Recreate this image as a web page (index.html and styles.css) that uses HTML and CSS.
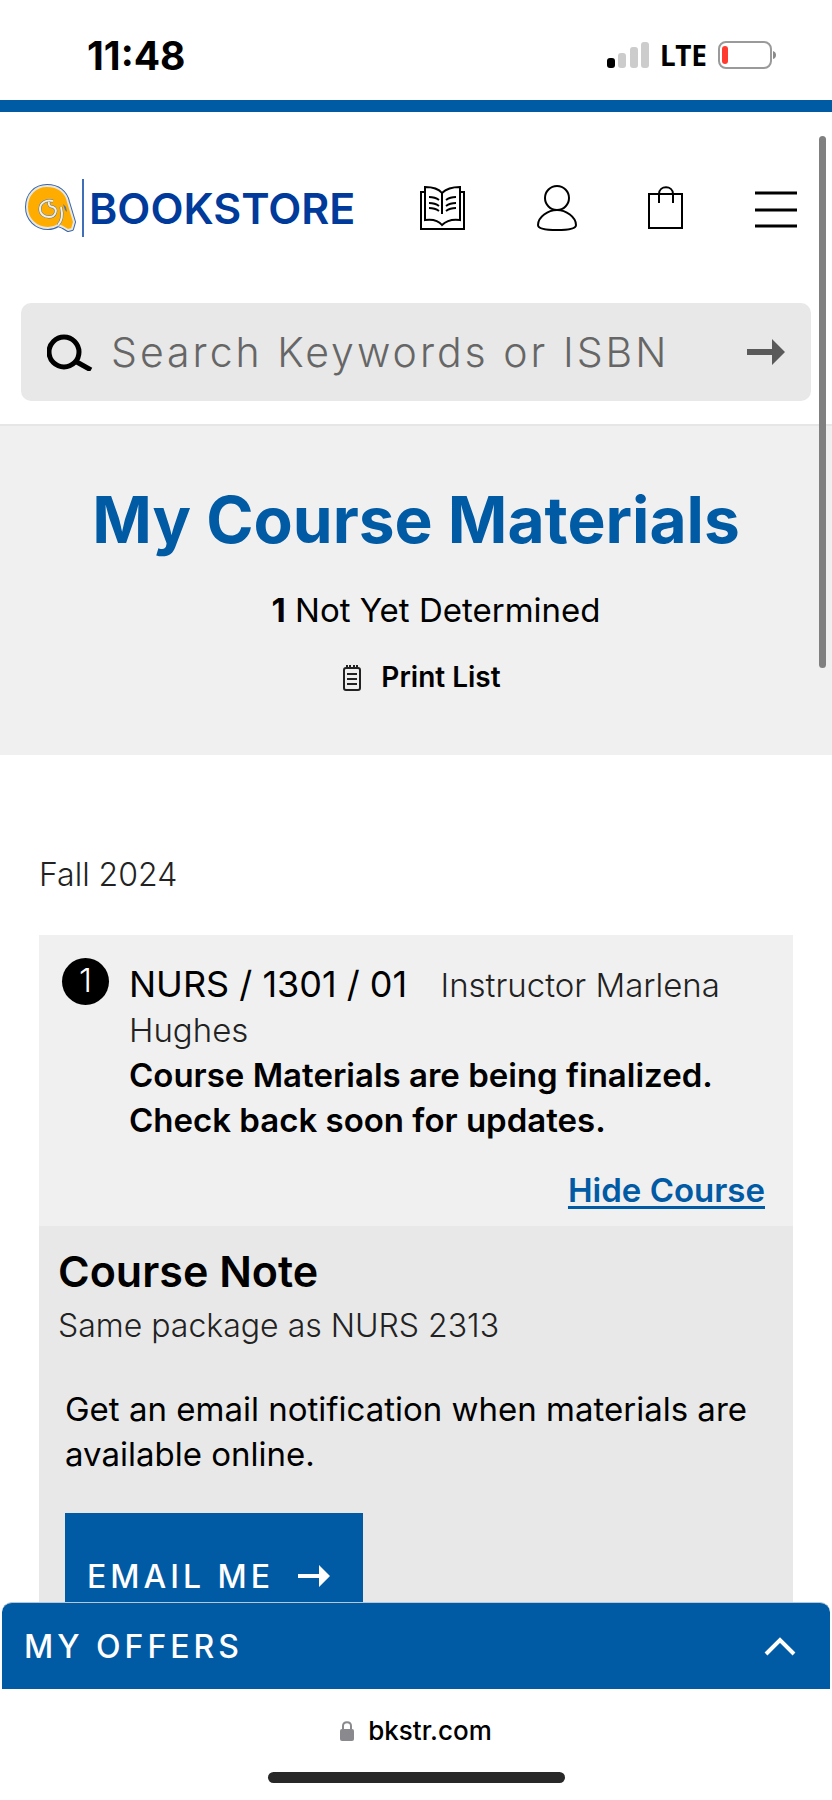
FILE: index.html
```
<!DOCTYPE html>
<html lang="en">

<head>
    <title>My Course Materials</title>
    <meta charset="utf-8">
    <meta name="viewport" content="width=device-width, initial-scale=1.0">
    <link rel="stylesheet" href="styles.css">
</head>

<body>

<div class="status">
    <span class="time">11:48</span>
    <div class="status-right">
        <svg width="42" height="28" viewBox="0 0 42 28" aria-hidden="true">
            <rect x="0" y="17" width="8" height="10" rx="3" fill="#000"/>
            <rect x="11" y="12" width="8" height="15" rx="3" fill="#ccc"/>
            <rect x="23" y="6" width="8" height="21" rx="3" fill="#ccc"/>
            <rect x="34" y="1" width="8" height="26" rx="3" fill="#ccc"/>
        </svg>
        <span class="network">LTE</span>
        <svg width="60" height="28" viewBox="0 0 60 28" aria-hidden="true">
            <rect x="1" y="1" width="52" height="26" rx="7" fill="none" stroke="#9a9a9a" stroke-width="2"/>
            <rect x="4" y="5" width="6" height="18" rx="3" fill="#ff3b30"/>
            <path d="M55 10q3 1 3 4t-3 4z" fill="#8a8a8a"/>
        </svg>
    </div>
</div>

<div class="page">
    <header class="header">
        <a class="logo" href="#">
            <svg width="52" height="48" viewBox="0 0 52 48" aria-hidden="true">
                <g stroke-linejoin="round">
                    <path d="M23 2C11 2 3 11 3 23s9 21 21 21c4 0 7-1 10-3l5 2 5 3 4-1 2-7-6-20C42 8 34 2 23 2z" fill="#ffac00" stroke="#3565b0" stroke-width="4"/>
                    <path d="M23 2C11 2 3 11 3 23s9 21 21 21c4 0 7-1 10-3l5 2 5 3 4-1 2-7-6-20C42 8 34 2 23 2z" fill="#ffac00" stroke="#e9e7dc" stroke-width="2"/>
                </g>
                <path d="M34 41c4-4 5-10 3-18M29 17c-7-2-13 2-13 8 0 5 4 8 9 8 7 0 9-8 4-10-3 0-5-2-4-5" fill="none" stroke="#56749c" stroke-width="3"/>
                <path d="M34 41c4-4 5-10 3-18M29 17c-7-2-13 2-13 8 0 5 4 8 9 8 7 0 9-8 4-10-3 0-5-2-4-5" fill="none" stroke="#f3efdf" stroke-width="2"/>
                <path d="M39 20l2 6 2 2-1-5z" fill="#56749c"/>
            </svg>
            <span class="logo-text">BOOKSTORE</span>
        </a>
        <nav class="nav">
            <button aria-label="Course materials">
                <svg width="46" height="46" viewBox="0 0 46 46">
                    <path d="M5 7H1v37h43V7h-4M5 2v33c7-1 13 0 17 5 5-5 11-6 18-5V2c-7 0-13 1-18 6C18 3 12 2 5 2zM22 8v21"/>
                    <path d="M9 12q6 0 10 3M9 18q6 0 10 3M9 23q6 0 10 3M36 12q-6 0-10 3M36 18q-6 0-10 3M36 23q-6 0-10 3"/>
                </svg>
            </button>
            <button aria-label="Account">
                <svg width="40" height="46" viewBox="0 0 40 46">
                    <circle cx="20" cy="13" r="12"/>
                    <path d="M20 25C11 25 1 32 1 40c0 3 5 5 19 5s19-2 19-5c0-8-10-15-19-15z"/>
                </svg>
            </button>
            <button aria-label="Shopping bag">
                <svg width="36" height="46" viewBox="0 0 36 46">
                    <path d="M1 9h33v34H1zM11 18V9c0-9 14-9 14 0v9"/>
                </svg>
            </button>
            <button aria-label="Menu">
                <svg width="42" height="46" viewBox="0 0 42 46">
                    <path d="M0 8h42M0 25h42M0 41h42" stroke-width="3"/>
                </svg>
            </button>
        </nav>
    </header>

    <form class="search" onsubmit="return false">
        <svg width="46" height="38" viewBox="0 0 46 38" aria-hidden="true">
            <circle cx="17" cy="19" r="15" fill="none" stroke="#000" stroke-width="5"/>
            <path d="M28 28l16 9" stroke="#000" stroke-width="5"/>
        </svg>
        <input type="text" aria-label="Search" placeholder="Search Keywords or ISBN">
        <button aria-label="Submit search">
            <svg width="38" height="26" viewBox="0 0 38 26">
                <path d="M0 10h25V0l13 13-13 13V16H0z" fill="#5a5a5a"/>
            </svg>
        </button>
    </form>

    <section class="hero">
        <h1>My Course Materials</h1>
        <p class="summary"><b>1</b> Not Yet Determined</p>
        <button class="print">
            <svg width="18" height="26" viewBox="0 0 18 26" aria-hidden="true">
                <rect x="1" y="3" width="16" height="22" rx="2"/>
                <path d="M4 0v4M7 0v4M11 0v4M14 0v4M4 9h10M4 14h10M4 19h10"/>
            </svg>
            Print List
        </button>
    </section>

    <main class="content">
        <p class="term">Fall 2024</p>
        <article class="course">
            <div class="course-top">
                <span class="number">1</span>
                <div class="course-info">
                    <p><span class="code">NURS / 1301 / 01</span> <span class="instructor">Instructor Marlena Hughes</span></p>
                    <p class="message">Course Materials are being finalized. Check back soon for updates.</p>
                </div>
            </div>
            <a class="hide" href="#">Hide Course</a>
            <div class="note">
                <h2>Course Note</h2>
                <p class="light">Same package as NURS 2313</p>
                <div class="notify">
                    <p>Get an email notification when materials are available online.</p>
                    <button class="email">
                        EMAIL ME
                        <svg width="32" height="22" viewBox="0 0 32 22" aria-hidden="true">
                            <path d="M0 9h21V0l11 11-11 11v-9H0z" fill="#fff"/>
                        </svg>
                    </button>
                </div>
            </div>
        </article>
    </main>
</div>

<div class="scrollbar"></div>

<button class="offers">
    MY OFFERS
    <svg width="32" height="20" viewBox="0 0 32 20" aria-hidden="true">
        <path d="M2 18L16 4l14 14" fill="none" stroke="#fff" stroke-width="4"/>
    </svg>
</button>

<footer class="browser">
    <div class="address">
        <svg width="14" height="20" viewBox="0 0 14 20" aria-hidden="true">
            <rect x="0" y="8" width="14" height="12" rx="2" fill="#8a8a8e"/>
            <path d="M3 9V5c0-5 8-5 8 0v4" fill="none" stroke="#8a8a8e" stroke-width="2"/>
        </svg>
        bkstr.com
    </div>
    <div class="home"></div>
</footer>

</body>

</html>
```

FILE: styles.css
```
* {
    box-sizing: border-box;
    margin: 0;
    padding: 0;
}

body {
    position: relative;
    display: flex;
    flex-direction: column;
    height: 100vh;
    overflow: hidden;
    background: #fff;
    color: #000;
    font-family: Inter, "Liberation Sans", sans-serif;
    font-size: 33px;
    line-height: 45px;
}

button {
    border: none;
    background: none;
    color: inherit;
    font: inherit;
    cursor: pointer;
}

svg {
    display: block;
    flex-shrink: 0;
}

/* phone status bar */
.status {
    display: flex;
    flex-shrink: 0;
    align-items: center;
    justify-content: space-between;
    height: 112px;
    padding: 10px 54px 0 87px;
    border-bottom: 12px solid #005aa4;
}

.time {
    font-size: 39px;
    font-weight: 700;
}

.status-right {
    display: flex;
    align-items: center;
    gap: 11px;
}

.network {
    font-family: "Noto Sans", sans-serif;
    font-size: 28px;
    font-weight: 700;
}

.page {
    flex: 1;
    min-height: 0;
    overflow: hidden;
}

.header {
    display: flex;
    align-items: center;
    justify-content: space-between;
    height: 191px;
    padding: 0 35px 0 24px;
}

.logo {
    display: flex;
    align-items: center;
    gap: 6px;
    color: #003a9b;
    text-decoration: none;
}

.logo-text {
    padding-left: 5px;
    border-left: 2px solid #3f6fb8;
    font-size: 43px;
    font-weight: 600;
    line-height: 58px;
}

.nav {
    display: flex;
    gap: 71px;
}

.nav svg {
    fill: none;
    stroke: #000;
    stroke-width: 2;
}

.search {
    display: flex;
    align-items: center;
    height: 98px;
    margin: 0 21px 23px;
    padding: 0 26px;
    border-radius: 10px;
    background: #e8e8e8;
}

.search input {
    flex: 1;
    min-width: 0;
    margin: 0 18px;
    border: none;
    outline: none;
    background: none;
    font-family: inherit;
    font-size: 41px;
    font-weight: 300;
    letter-spacing: 3px;
}

.search input::placeholder {
    color: #666;
    opacity: 1;
}

.hero {
    height: 331px;
    padding-top: 60px;
    border-top: 2px solid #e6e6e6;
    background: #f0f0f0;
    text-align: center;
}

.hero h1 {
    color: #005aa4;
    font-size: 64px;
    font-weight: 700;
    line-height: 68px;
}

.summary {
    margin-top: 34px;
    padding-left: 40px;
}

.print {
    display: flex;
    align-items: center;
    gap: 20px;
    margin: 22px auto 0;
    padding-left: 12px;
    font-size: 28px;
    font-weight: 600;
}

.print svg {
    fill: none;
    stroke: #222;
    stroke-width: 2;
}

.content {
    padding: 97px 39px 0;
}

.term,
.instructor,
.light {
    color: #222;
    font-weight: 300;
}

.term,
.light {
    font-size: 32px;
}

.course {
    margin-top: 38px;
    background: #f0f0f0;
}

.course-top {
    display: flex;
    gap: 20px;
    padding: 23px 50px 0 23px;
}

.number {
    flex-shrink: 0;
    width: 47px;
    height: 47px;
    border-radius: 50%;
    background: #000;
    color: #fff;
    font-weight: 300;
    text-align: center;
}

.course-info {
    padding-top: 4px;
}

.code {
    margin-right: 24px;
    font-size: 36px;
}

.message,
.hide {
    font-weight: 600;
}

.hide {
    display: block;
    width: fit-content;
    margin: 25px 28px 0 auto;
    padding-bottom: 13px;
    color: #005aa4;
    text-underline-offset: 4px;
}

.note {
    padding: 18px 19px 40px;
    background: #e8e8e8;
}

.note h2 {
    font-size: 43px;
    font-weight: 600;
    line-height: 54px;
}

.light {
    margin-top: 5px;
}

.notify {
    padding: 39px 7px 0;
}

.email {
    display: flex;
    align-items: center;
    gap: 24px;
    width: 298px;
    height: 126px;
    margin-top: 36px;
    padding: 0 22px;
    background: #005aa4;
    color: #fff;
    font-size: 32px;
    font-weight: 500;
    letter-spacing: 4px;
}

.scrollbar {
    position: absolute;
    top: 136px;
    right: 6px;
    width: 7px;
    height: 532px;
    border-radius: 4px;
    background: #808080;
}

.offers {
    display: flex;
    flex-shrink: 0;
    align-items: center;
    justify-content: space-between;
    height: 87px;
    margin: 0 2px;
    padding: 0 34px 0 22px;
    border-top: 1px solid #b5c9da;
    border-radius: 10px 10px 0 0;
    background: #005aa4;
    color: #fff;
    font-size: 32px;
    font-weight: 500;
    letter-spacing: 4px;
}

/* browser address bar and home indicator */
.browser {
    display: flex;
    flex-direction: column;
    flex-shrink: 0;
    align-items: center;
    justify-content: space-between;
    height: 111px;
    padding: 19px 0 17px;
}

.address {
    display: flex;
    align-items: center;
    gap: 14px;
    font-size: 26px;
    font-weight: 500;
}

.home {
    width: 297px;
    height: 11px;
    border-radius: 6px;
    background: #282828;
}
```
